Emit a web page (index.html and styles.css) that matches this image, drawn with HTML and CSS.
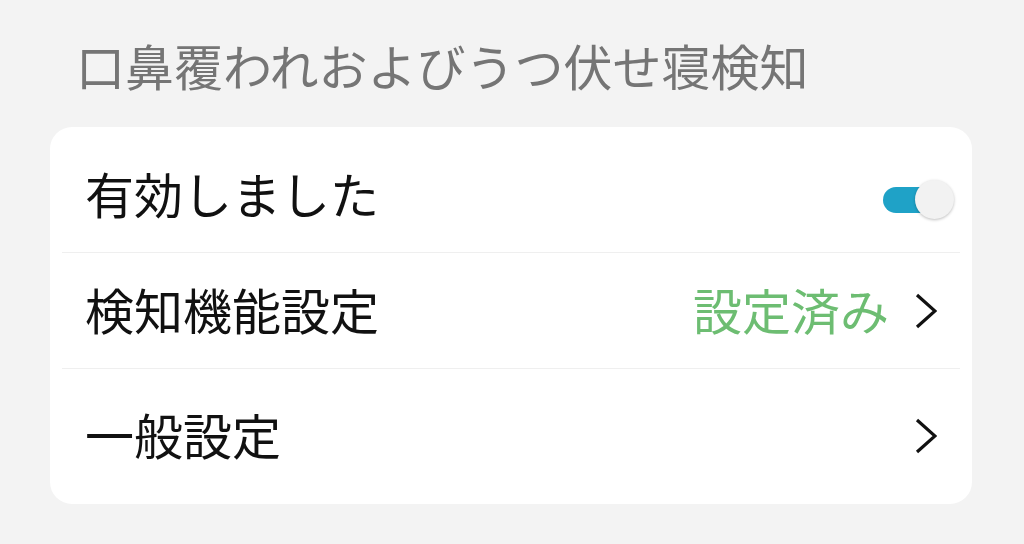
FILE: index.html
```html
<!DOCTYPE html>
<html lang="ja">
<head>
    <meta charset="UTF-8">
    <meta name="viewport" content="width=device-width, initial-scale=1.0">
    <title>口鼻覆われおよびうつ伏せ寝検知</title>
    <link rel="stylesheet" href="styles.css">
</head>
<body>
    <div class="page">
        <h1 class="section-title">口鼻覆われおよびうつ伏せ寝検知</h1>

        <div class="card">
            <div class="row">
                <span class="row-label">有効しました</span>
                <div class="switch on">
                    <span class="switch-track"></span>
                    <span class="switch-thumb"></span>
                </div>
            </div>
            <div class="divider"></div>
            <div class="row">
                <span class="row-label">検知機能設定</span>
                <span class="row-value">設定済み</span>
                <svg class="chevron" width="22" height="36" viewBox="0 0 22 36">
                    <polyline points="2,2 20,18 2,34" fill="none" stroke="#111" stroke-width="3.2"/>
                </svg>
            </div>
            <div class="divider"></div>
            <div class="row row-last">
                <span class="row-label">一般設定</span>
                <svg class="chevron" width="22" height="36" viewBox="0 0 22 36">
                    <polyline points="2,2 20,18 2,34" fill="none" stroke="#111" stroke-width="3.2"/>
                </svg>
            </div>
        </div>
    </div>
</body>
</html>
```

FILE: styles.css
```css
body {
    margin: 0;
    padding: 0;
    background: #f3f3f3;
    font-family: "Noto Sans CJK JP", "Noto Sans", sans-serif;
    height: 544px;
    overflow: hidden;
}
.page {
    padding: 0 52px 0 50px;
}
.section-title {
    margin: 0;
    padding: 33px 0 0 26px;
    height: 127px;
    box-sizing: border-box;
    font-size: 49px;
    line-height: 64px;
    font-weight: normal;
    color: #757575;
}
.card {
    background: #fff;
    border-radius: 22px;
    padding: 10px 0 1px;
}
.row {
    display: flex;
    align-items: center;
    height: 115px;
    padding: 0 35px;
}
.row-last {
    height: 134px;
}
.row-label {
    flex: 1;
    font-size: 49px;
    line-height: 60px;
    padding-bottom: 4px;
    color: #111;
}
.row-value {
    font-size: 49px;
    line-height: 60px;
    padding-bottom: 4px;
    color: #6dbd72;
    margin-right: 26px;
}
.chevron {
    display: block;
}
.divider {
    height: 1px;
    margin: 0 12px;
    background: #efefef;
}
.switch {
    position: relative;
    width: 71px;
    height: 40px;
    margin: 10px -17px 0 0;
}
.switch-track {
    position: absolute;
    left: 0;
    top: 7px;
    width: 58px;
    height: 26px;
    border-radius: 13px;
    background: #1fa2c7;
}
.switch-thumb {
    position: absolute;
    right: 0;
    top: 0;
    width: 39px;
    height: 39px;
    border-radius: 50%;
    background: #f2f2f2;
    box-shadow: 0 1px 3px rgba(0, 0, 0, 0.25);
}
```
